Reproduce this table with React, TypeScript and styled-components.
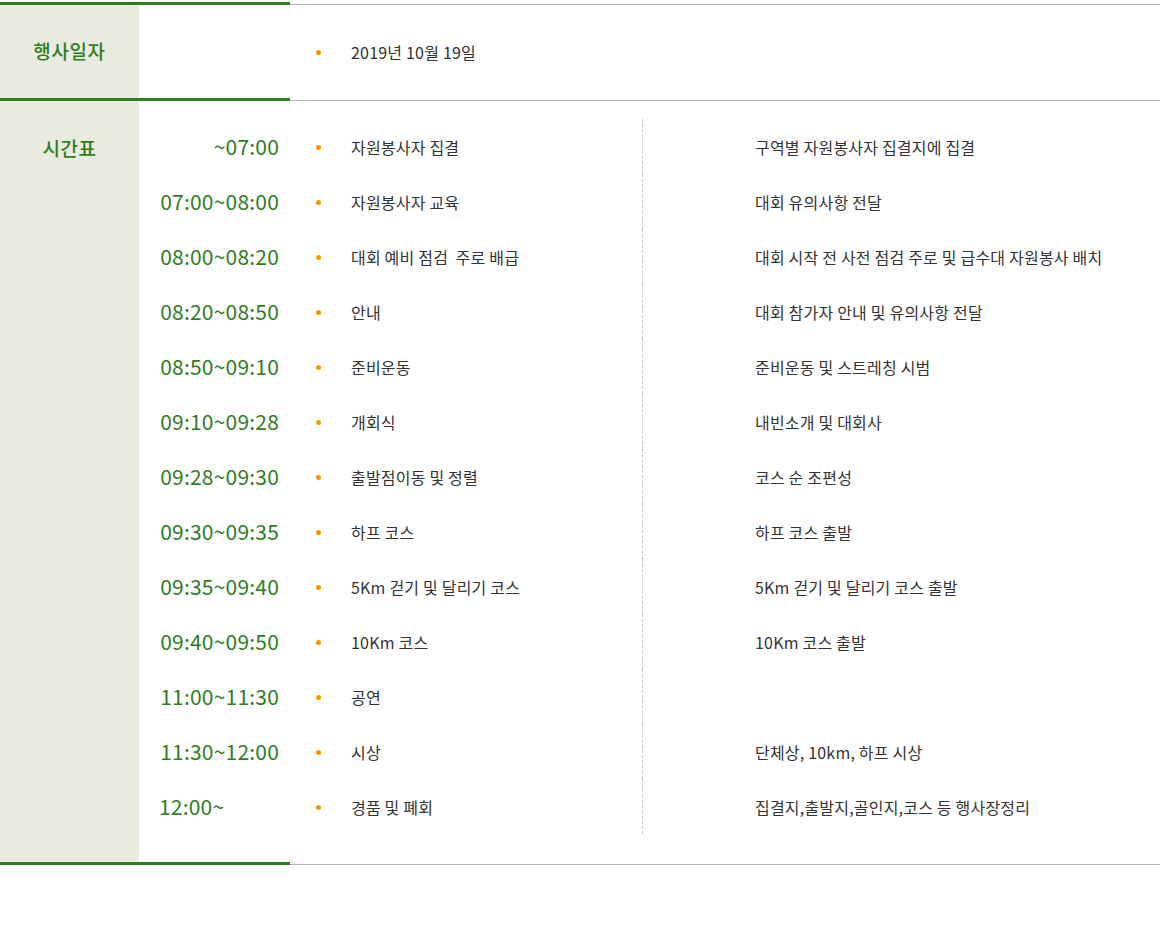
import React from "react";
import styled, { createGlobalStyle } from "styled-components";

const GREEN = "#2f7d1f";

const Global = createGlobalStyle`
  html, body { margin: 0; padding: 0; background: #fff; }
  body { font-family: "Noto Sans CJK KR", "Noto Sans", sans-serif; color: #333; }
  * { box-sizing: border-box; }
`;

const Page = styled.div`
  width: 1160px;
  padding-top: 2px;
`;

const Divider = styled.div`
  display: flex;
  height: 3px;
`;

const GreenRule = styled.div`
  width: 290px;
  background: ${GREEN};
`;

const GrayRule = styled.div`
  flex: 1;
  align-self: flex-end;
  height: 1px;
  background: #b5b5b5;
`;

const Section = styled.section<{ $height: number }>`
  display: grid;
  grid-template-columns: 139px 1fr;
  height: ${(p) => p.$height}px;
`;

const Label = styled.div<{ $top?: boolean }>`
  background: #e8ebdd;
  color: ${GREEN};
  font-size: 19px;
  font-weight: 500;
  line-height: 24px;
  text-align: center;
  display: flex;
  justify-content: center;
  align-items: ${(p) => (p.$top ? "flex-start" : "center")};
  padding-top: ${(p) => (p.$top ? "35px" : "0")};
  padding-bottom: ${(p) => (p.$top ? "0" : "2px")};
  letter-spacing: 0.6px;
`;

const Body = styled.div<{ $padTop: number }>`
  padding-top: ${(p) => p.$padTop}px;
`;

const Row = styled.div<{ $h: number }>`
  display: grid;
  grid-template-columns: 151px 352px 1fr;
  height: ${(p) => p.$h}px;
  align-items: stretch;
`;

const Time = styled.div<{ $align: "left" | "right" }>`
  color: ${GREEN};
  font-size: 21px;
  line-height: 55px;
  padding: 0 11px 0 20px;
  text-align: ${(p) => p.$align};
  letter-spacing: 0.2px;
`;

const Item = styled.div`
  display: flex;
  align-items: center;
  padding-left: 26px;
  font-size: 16px;
  color: #333;
  letter-spacing: 0.2px;
  white-space: pre;
`;

const Dot = styled.span`
  width: 5px;
  height: 5px;
  border-radius: 50%;
  background: #f39800;
  margin-right: 30px;
  flex: none;
  position: relative;
  top: 1px;
`;

const Desc = styled.div<{ $dashed: boolean }>`
  display: flex;
  align-items: center;
  padding-left: 112px;
  font-size: 16px;
  color: #333;
  letter-spacing: 0.2px;
  border-left: 1px ${(p) => (p.$dashed ? "dashed #c8c8c8" : "solid transparent")};
`;

type Entry = { time: string; align: "left" | "right"; item: string; desc: string };

const schedule: Entry[] = [
  { time: "~07:00", align: "right", item: "자원봉사자 집결", desc: "구역별 자원봉사자 집결지에 집결" },
  { time: "07:00~08:00", align: "right", item: "자원봉사자 교육", desc: "대회 유의사항 전달" },
  { time: "08:00~08:20", align: "right", item: "대회 예비 점검  주로 배급", desc: "대회 시작 전 사전 점검 주로 및 급수대 자원봉사 배치" },
  { time: "08:20~08:50", align: "right", item: "안내", desc: "대회 참가자 안내 및 유의사항 전달" },
  { time: "08:50~09:10", align: "right", item: "준비운동", desc: "준비운동 및 스트레칭 시범" },
  { time: "09:10~09:28", align: "right", item: "개회식", desc: "내빈소개 및 대회사" },
  { time: "09:28~09:30", align: "right", item: "출발점이동 및 정렬", desc: "코스 순 조편성" },
  { time: "09:30~09:35", align: "right", item: "하프 코스", desc: "하프 코스 출발" },
  { time: "09:35~09:40", align: "right", item: "5Km 걷기 및 달리기 코스", desc: "5Km 걷기 및 달리기 코스 출발" },
  { time: "09:40~09:50", align: "right", item: "10Km 코스", desc: "10Km 코스 출발" },
  { time: "11:00~11:30", align: "right", item: "공연", desc: "" },
  { time: "11:30~12:00", align: "right", item: "시상", desc: "단체상, 10km, 하프 시상" },
  { time: "12:00~", align: "left", item: "경품 및 폐회", desc: "집결지,출발지,골인지,코스 등 행사장정리" },
];

const Rule = () => (
  <Divider>
    <GreenRule />
    <GrayRule />
  </Divider>
);

export default function App() {
  return (
    <>
      <Global />
      <Page>
        <Rule />
        <Section $height={93}>
          <Label>행사일자</Label>
          <Body $padTop={0}>
            <Row $h={93}>
              <Time $align="right" />
              <Item>
                <Dot />
                2019년 10월 19일
              </Item>
              <Desc $dashed={false} />
            </Row>
          </Body>
        </Section>
        <Rule />
        <Section $height={761}>
          <Label $top>시간표</Label>
          <Body $padTop={18}>
            {schedule.map((e) => (
              <Row key={e.time} $h={55}>
                <Time $align={e.align}>{e.time}</Time>
                <Item>
                  <Dot />
                  {e.item}
                </Item>
                <Desc $dashed>{e.desc}</Desc>
              </Row>
            ))}
          </Body>
        </Section>
        <Rule />
      </Page>
    </>
  );
}
